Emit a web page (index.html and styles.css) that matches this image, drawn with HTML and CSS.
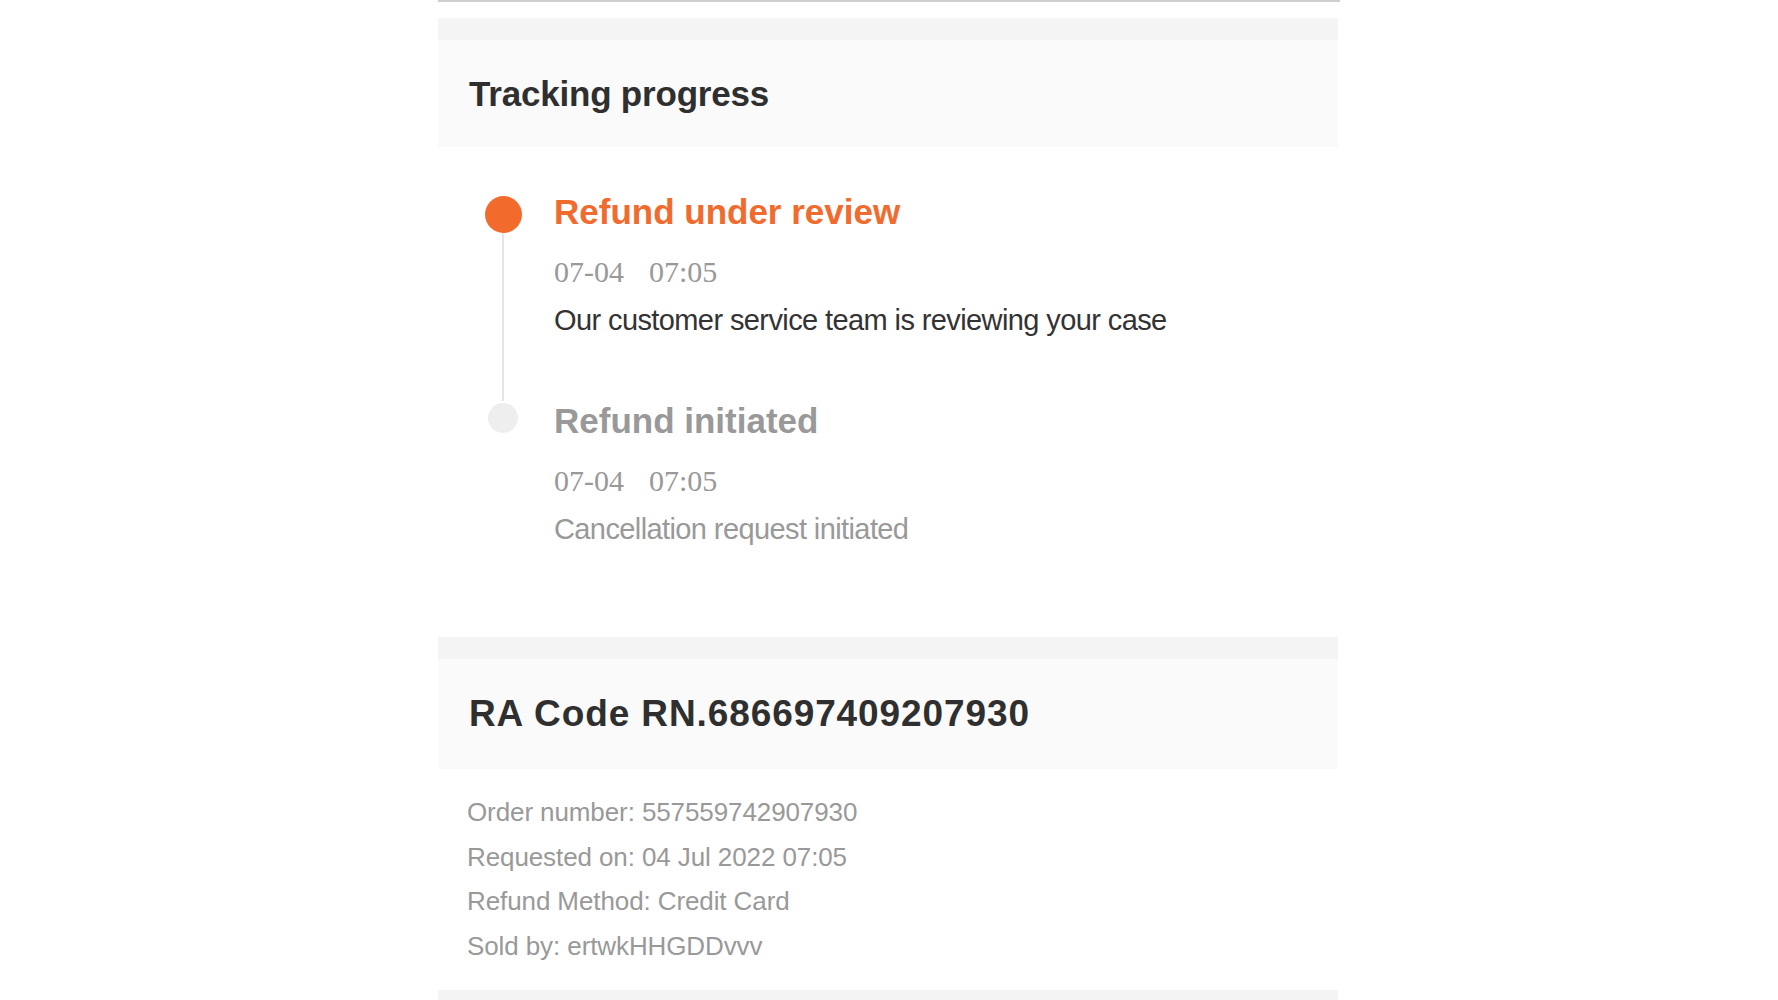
FILE: index.html
```html
<!DOCTYPE html>
<html lang="en">
<head>
<meta charset="utf-8">
<title>Tracking progress</title>
<link rel="stylesheet" href="styles.css">
</head>
<body>
<div class="page">
  <div class="top-rule"></div>
  <section class="card">
    <div class="band"></div>
    <header class="card-header"><h2 class="heading">Tracking progress</h2></header>
    <div class="timeline">
      <div class="step step-active">
        <div class="rail">
          <span class="dot dot-active"></span>
          <span class="connector"></span>
        </div>
        <div class="step-body">
          <div class="step-title">Refund under review</div>
          <div class="step-time"><span>07-04</span><span class="clock">07:05</span></div>
          <div class="step-desc">Our customer service team is reviewing your case</div>
        </div>
      </div>
      <div class="step step-done">
        <div class="rail">
          <span class="dot dot-done"></span>
        </div>
        <div class="step-body">
          <div class="step-title">Refund initiated</div>
          <div class="step-time"><span>07-04</span><span class="clock">07:05</span></div>
          <div class="step-desc">Cancellation request initiated</div>
        </div>
      </div>
    </div>
  </section>
  <section class="card">
    <div class="band"></div>
    <header class="card-header card-header-ra"><h2 class="heading heading-ra">RA Code RN.686697409207930</h2></header>
    <div class="details">
      <div class="detail">Order number: 557559742907930</div>
      <div class="detail">Requested on: 04 Jul 2022 07:05</div>
      <div class="detail">Refund Method: Credit Card</div>
      <div class="detail">Sold by: ertwkHHGDDvvv</div>
    </div>
  </section>
  <div class="band band-bottom"></div>
</div>
</body>
</html>
```

FILE: styles.css
```css
* { box-sizing: border-box; }
html, body { margin: 0; padding: 0; background: #ffffff; }
body {
  font-family: "Liberation Sans", Arial, Helvetica, sans-serif;
  color: #333333;
}
.page {
  width: 902px;
  margin: 0 auto;
  overflow: hidden;
}
.top-rule {
  height: 2px;
  background: #cfcfcf;
  margin-bottom: 16px;
}
.card {
  width: 900px;
}
.band {
  height: 22px;
  background: #f4f4f4;
}
.card-header {
  height: 107px;
  background: #fafafa;
  display: flex;
  align-items: center;
  padding-left: 31px;
}
.heading {
  margin: 0;
  font-size: 35px;
  font-weight: 700;
  letter-spacing: -0.2px;
  color: #2f2f2f;
  line-height: 40px;
}
.card-header-ra {
  height: 110px;
}
.heading-ra {
  font-size: 37px;
  letter-spacing: 0.9px;
}
.timeline {
  padding-top: 45px;
  padding-bottom: 90px;
}
.step {
  display: grid;
  grid-template-columns: 116px 1fr;
}
.step-active .step-body {
  padding-bottom: 63px;
}
.rail {
  display: flex;
  flex-direction: column;
  align-items: flex-start;
}
.dot {
  display: block;
  border-radius: 50%;
}
.dot-active {
  width: 37px;
  height: 37px;
  margin-top: 4px;
  margin-left: 47px;
  background: #f36b2c;
}
.dot-done {
  width: 30px;
  height: 30px;
  margin-top: 2px;
  margin-left: 50px;
  background: #eeeeee;
}
.connector {
  flex: 1;
  width: 2px;
  margin-left: 64px;
  background: #e6e6e6;
}
.step-title {
  font-size: 35px;
  font-weight: 700;
  line-height: 40px;
  color: #f06b2d;
}
.step-done .step-title {
  color: #999999;
}
.step-time {
  margin-top: 22px;
  display: flex;
  gap: 25px;
  font-family: "Liberation Serif", "Times New Roman", serif;
  font-size: 30px;
  line-height: 36px;
  color: #999999;
}
.step-desc {
  margin-top: 12px;
  font-size: 29px;
  line-height: 36px;
  letter-spacing: -0.6px;
  color: #333333;
}
.step-done .step-desc {
  color: #999999;
}
.details {
  padding: 21px 0 21px 29px;
}
.detail {
  font-size: 26px;
  line-height: 44.7px;
  letter-spacing: -0.1px;
  color: #999999;
}
.band-bottom {
  width: 900px;
  height: 30px;
  background: #f4f4f4;
}
```
